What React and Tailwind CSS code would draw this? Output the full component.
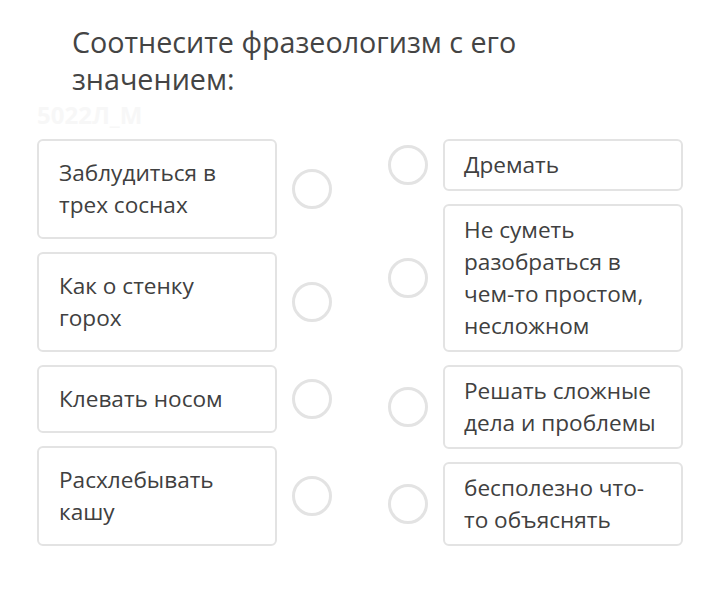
import React from "react";

const left = [
  "Заблудиться в трех соснах",
  "Как о стенку горох",
  "Клевать носом",
  "Расхлебывать кашу",
];
const right = [
  "Дремать",
  "Не суметь разобраться в чем-то простом, несложном",
  "Решать сложные дела и проблемы",
  "бесполезно что-то объяснять",
];

function Circle() {
  return <div className="w-[40px] h-[40px] shrink-0 rounded-full border-[3px] border-[#e3e3e3] bg-white" />;
}

export default function App() {
  return (
    <div
      className="w-[720px] h-[616px] bg-white text-[#404040]"
      style={{ fontFamily: '"Open Sans", "Noto Sans", sans-serif' }}
    >
      <div className="ml-[72px] pt-[23px] w-[470px] text-[28.7px] leading-[37px] text-[#444444]">
        Соотнесите фразеологизм с его значением:
      </div>
      <div className="pl-[37px] h-[33px] text-[24px] leading-[33px] font-bold text-[#f7f7f7] mt-[1px]">
        5022Л_М
      </div>
      <div className="flex gap-[56px] pl-[37px] mt-[8px]">
        <div className="flex flex-col gap-[13px] w-[295px]">
          {left.map((t, i) => (
            <div key={i} className="flex items-center gap-[15px]">
              <div className="w-[240px] rounded-[6px] border-2 border-[#e3e3e3] px-[20px] py-[16px] text-[22.6px] leading-[32px]">
                {t}
              </div>
              <Circle />
            </div>
          ))}
        </div>
        <div className="flex flex-col gap-[13px] w-[295px]">
          {right.map((t, i) => (
            <div key={i} className="flex items-center gap-[15px]">
              <Circle />
              <div className="w-[240px] rounded-[6px] border-2 border-[#e3e3e3] px-[19px] py-[8px] text-[22.6px] leading-[32px]">
                {t}
              </div>
            </div>
          ))}
        </div>
      </div>
    </div>
  );
}
